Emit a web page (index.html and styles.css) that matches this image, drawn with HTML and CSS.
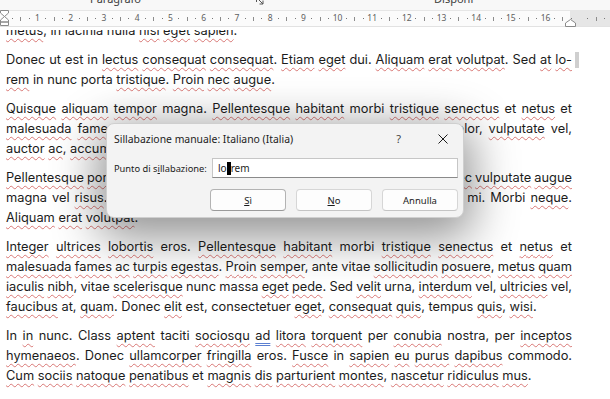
FILE: index.html
```html
<!DOCTYPE html>
<html lang="it">
<head>
<meta charset="utf-8">
<title>Sillabazione manuale</title>
<link rel="stylesheet" href="styles.css">
</head>
<body>
<div class="ribbon">
  <span class="grp grp-par">Paragrafo</span>
  <svg class="launch" width="8" height="8" viewBox="0 0 8 8"><path d="M0.5 0.5H5 M0.5 0.5V5 M2.5 2.5L7 7 M7 3.5V7H3.5" fill="none" stroke="#555" stroke-width="1"/></svg>
  <span class="grp grp-disp">Disponi</span>
</div>
<div class="ruler">
  <svg class="lind" width="10" height="18" viewBox="0 0 10 18"><path d="M0.5 0.5H8.5V3L4.5 6.5L0.5 3Z M0.5 12V10L4.5 6.5L8.5 10V12Z M0.5 12H8.5V15.5H0.5Z" fill="#fff" stroke="#8a8a8a" stroke-width="1"/></svg>
  <svg class="rind" width="11" height="8" viewBox="0 0 11 8"><path d="M0.5 7.5V4L5.5 0.5L10.5 4V7.5Z" fill="#fff" stroke="#8a8a8a" stroke-width="1"/></svg>
  <div class="marks">
    <i class="d"></i><i class="t"></i><i class="d"></i><i class="n">1</i>
    <i class="d"></i><i class="t"></i><i class="d"></i><i class="n">2</i>
    <i class="d"></i><i class="t"></i><i class="d"></i><i class="n">3</i>
    <i class="d"></i><i class="t"></i><i class="d"></i><i class="n">4</i>
    <i class="d"></i><i class="t"></i><i class="d"></i><i class="n">5</i>
    <i class="d"></i><i class="t"></i><i class="d"></i><i class="n">6</i>
    <i class="d"></i><i class="t"></i><i class="d"></i><i class="n">7</i>
    <i class="d"></i><i class="t"></i><i class="d"></i><i class="n">8</i>
    <i class="d"></i><i class="t"></i><i class="d"></i><i class="n">9</i>
    <i class="d"></i><i class="t"></i><i class="d"></i><i class="n">10</i>
    <i class="d"></i><i class="t"></i><i class="d"></i><i class="n">11</i>
    <i class="d"></i><i class="t"></i><i class="d"></i><i class="n">12</i>
    <i class="d"></i><i class="t"></i><i class="d"></i><i class="n">13</i>
    <i class="d"></i><i class="t"></i><i class="d"></i><i class="n">14</i>
    <i class="d"></i><i class="t"></i><i class="d"></i><i class="n">15</i>
    <i class="d"></i><i class="t"></i><i class="d"></i><i class="n">16</i>
    <i class="d"></i><i class="t"></i><i class="d"></i><i class="n"></i>
    <i class="d"></i><i class="t"></i><i class="d"></i>
  </div>
</div>
<div class="doc">
  <div class="page">
    <p><span class="l e"><u>metus</u>, in lacinia nulla <u>nisl</u> <u>eget</u> <u>sapien</u>.</span></p>
    <p><span class="l mark">Donec ut est in <u>lectus</u> <u>consequat</u> <u>consequat</u>. <u>Etiam</u> <u>eget</u> dui. <u>Aliquam</u> <u>erat</u> <u>volutpat</u>. Sed <u>at</u> <u>lo-</u></span><span class="l e"><u>rem</u> in nunc porta <u>tristique</u>. <u>Proin</u> <u>nec</u> <u>augue</u>.</span></p>
    <p><span class="l"><u>Quisque</u> <u>aliquam</u> <u>tempor</u> magna. <u>Pellentesque</u> <u>habitant</u> morbi <u>tristique</u> <u>senectus</u> et <u>netus</u> et</span><span class="l"><u>malesuada</u> <u>fames</u> ac <u>turpis</u> <u>egestas</u>. Nunc ac magna. <u>Maecenas</u> odio dolor, <u>vulputate</u> vel,</span><span class="l e"><u>auctor</u> <u>ac</u>, <u>accumsan</u> id, felis. <u>Pellentesque</u> cursus <u>sagittis</u> felis.</span></p>
    <p><span class="l"><u>Pellentesque</u> <u>porttitor</u>, velit <u>lacinia</u> <u>egestas</u> <u>auctor</u>, diam eros tempus arcu, <u>nec</u> <u>vulputate</u> <u>augue</u></span><span class="l">magna vel <u>risus</u>. Cras non magna vel ante <u>adipiscing</u> <u>rhoncus</u>. <u>Vivamus</u> a mi. Morbi <u>neque</u>.</span><span class="l e"><u>Aliquam</u> <u>erat</u> <u>volutpat</u>.</span></p>
    <p><span class="l"><u>Integer</u> <u>ultrices</u> <u>lobortis</u> eros. <u>Pellentesque</u> <u>habitant</u> morbi <u>tristique</u> <u>senectus</u> et <u>netus</u> et</span><span class="l"><u>malesuada</u> <u>fames</u> <u>ac</u> <u>turpis</u> <u>egestas</u>. <u>Proin</u> <u>semper</u>, ante vitae <u>sollicitudin</u> <u>posuere</u>, <u>metus</u> <u>quam</u></span><span class="l"><u>iaculis</u> <u>nibh</u>, vitae <u>scelerisque</u> nunc massa <u>eget</u> <u>pede</u>. Sed <u>velit</u> urna, <u>interdum</u> vel, <u>ultricies</u> vel,</span><span class="l e"><u>faucibus</u> at, <u>quam</u>. Donec <u>elit</u> est, consectetuer <u>eget</u>, <u>consequat</u> <u>quis</u>, tempus <u>quis</u>, <u>wisi</u>.</span></p>
    <p><span class="l">In <u>in</u> nunc. Class <u>aptent</u> taciti <u>sociosqu</u> <u class="gr">ad</u> <u>litora</u> <u>torquent</u> per <u>conubia</u> nostra, per <u>inceptos</u></span><span class="l"><u>hymenaeos</u>. Donec <u>ullamcorper</u> <u>fringilla</u> eros. <u>Fusce</u> in <u>sapien</u> <u>eu</u> <u>purus</u> <u>dapibus</u> commodo.</span><span class="l e"><u>Cum</u> <u>sociis</u> <u>natoque</u> <u>penatibus</u> et <u>magnis</u> <u>dis</u> <u>parturient</u> <u>montes</u>, <u>nascetur</u> <u>ridiculus</u> <u>mus</u>.</span></p>
  </div>

  <div class="dlg" role="dialog">
    <div class="dlg-title">
      <span class="dlg-caption">Sillabazione manuale: Italiano (Italia)</span>
      <span class="dlg-help">?</span>
      <svg class="dlg-close" width="10" height="10" viewBox="0 0 10 10"><path d="M0.5 0.5L9.5 9.5 M9.5 0.5L0.5 9.5" stroke="#1b1b1b" stroke-width="1"/></svg>
    </div>
    <div class="dlg-row">
      <span class="dlg-label">Punto di s<u>i</u>llabazione:</span>
      <div class="dlg-input">lo<span class="caret"></span>rem</div>
    </div>
    <div class="dlg-btns">
      <span class="btn btn-def"><u>S</u>ì</span>
      <span class="btn"><u>N</u>o</span>
      <span class="btn">Annulla</span>
    </div>
  </div>
</div>
</body>
</html>
```

FILE: styles.css
```css
* { box-sizing: border-box; }
html, body { margin: 0; padding: 0; }
body {
  width: 610px;
  height: 399px;
  overflow: hidden;
  background: #ffffff;
  font-family: "Inter", "Liberation Sans", sans-serif;
}

/* ribbon strip (cut off) */
.ribbon {
  height: 10px;
  background: #f8f8f8;
  display: flex;
  align-items: flex-start;
  overflow: hidden;
  font-family: "Noto Sans", sans-serif;
  font-size: 11px;
  color: #404040;
}
.grp { line-height: 12px; margin-top: -7px; }
.grp-par { margin-left: 90px; }
.launch { margin-left: 115px; margin-top: -3px; }
.grp-disp { margin-left: 170px; }

/* ruler */
.ruler {
  position: relative;
  height: 17px;
  margin-bottom: 3px;
  background: linear-gradient(90deg, #fbfbfb 0 570px, #e6e6e6 570px);
  border-top: 1px solid #e6e6e6;
  border-bottom: 1px solid #e2e2e2;
  font-family: "Noto Sans", sans-serif;
  font-size: 8.5px;
  color: #606060;
}
.marks {
  display: flex;
  height: 100%;
  padding-left: 8.46px;
}
.marks i {
  flex: 0 0 8.325px;
  display: flex;
  justify-content: center;
  align-items: center;
  font-style: normal;
  line-height: 1;
  white-space: nowrap;
}
.marks .d::before { content: ""; width: 1px; height: 1px; background: #777; }
.marks .t::before { content: ""; width: 1px; height: 4px; background: #8c8c8c; }
.lind { position: absolute; left: 0; top: -1px; }
.rind { position: absolute; left: 565px; top: 8px; }

/* document */
.doc {
  position: relative;
  height: 369px;
  overflow: hidden;
}
.page {
  width: 572px;
  padding-left: 6px;
  margin-top: -9px;
  font-family: "Inter", "Liberation Sans", sans-serif;
  font-size: 12.8px;
  color: #1c1c1c;
}
.page p { margin: 0 0 9px; }
.l {
  display: block;
  line-height: 20px;
  text-align: justify;
  text-align-last: justify;
  word-spacing: -2px;
}
.l.e { text-align: left; text-align-last: left; word-spacing: 0; }
.mark { position: relative; }
.mark::after {
  content: "";
  position: absolute;
  right: -7px;
  top: 2px;
  width: 4px;
  height: 16px;
  background: #cfcfcf;
}
.page u {
  text-decoration: underline wavy rgba(200, 64, 60, 0.68);
  text-decoration-thickness: 1px;
  text-underline-offset: 3px;
  text-decoration-skip-ink: none;
}
.page u.gr {
  text-decoration: underline double #5b7fd1;
}

/* dialog */
.dlg {
  position: absolute;
  left: 106px;
  top: 93px;
  width: 358px;
  height: 95px;
  background: #f3f3f3;
  border: 1px solid #cfcfcf;
  border-radius: 8px;
  box-shadow: 0 12px 46px 8px rgba(0, 0, 0, 0.42);
  font-family: "Noto Sans", sans-serif;
  font-size: 9.3px;
  color: #1b1b1b;
  padding: 0 5px 0 7px;
}
.dlg-title {
  height: 29px;
  display: flex;
  align-items: center;
}
.dlg-caption { font-size: 10.4px; color: #222; white-space: nowrap; }
.dlg-help { margin-left: auto; font-size: 11px; color: #444; margin-right: 37px; }
.dlg-close { margin-right: 10px; }
.dlg-row {
  display: flex;
  align-items: center;
  margin-top: 5px;
  height: 20px;
}
.dlg-label { width: 98px; white-space: nowrap; }
.dlg-label u { text-decoration: underline; text-underline-offset: 1px; }
.dlg-input {
  width: 246px;
  height: 20px;
  background: #fff;
  border: 1px solid #c6c6c6;
  border-bottom-color: #8a8a8a;
  display: flex;
  align-items: center;
  padding-left: 5px;
  font-size: 10px;
}
.caret {
  display: inline-block;
  width: 4px;
  height: 13px;
  background: #000;
}
.dlg-btns {
  display: flex;
  justify-content: flex-end;
  gap: 10px;
  margin-top: 11px;
}
.btn {
  width: 76px;
  height: 22px;
  display: flex;
  align-items: center;
  justify-content: center;
  background: #fdfdfd;
  border: 1px solid #d6d6d6;
  border-bottom-color: #c4c4c4;
  border-radius: 4px;
  font-size: 9.5px;
  color: #1b1b1b;
}
.btn-def { border-color: #b3b3b3; border-bottom-color: #9a9a9a; }
.btn u { text-decoration: underline; text-underline-offset: 1px; }
```
